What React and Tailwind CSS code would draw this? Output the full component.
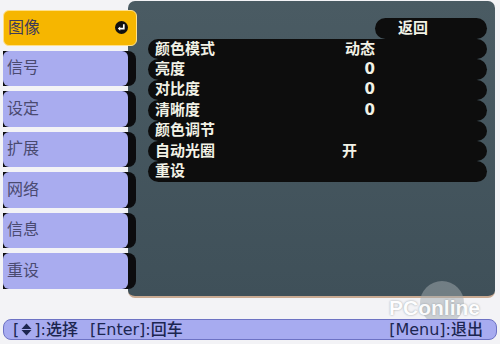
import React from 'react'

const tabs = ['图像', '信号', '设定', '扩展', '网络', '信息', '重设']

const rows = [
    { label: '颜色模式', value: '动态', align: 'text-right' },
    { label: '亮度', value: '0', align: 'text-right' },
    { label: '对比度', value: '0', align: 'text-right' },
    { label: '清晰度', value: '0', align: 'text-right' },
    { label: '颜色调节', value: '', align: 'text-right' },
    { label: '自动光圈', value: '开', align: 'text-left' },
    { label: '重设', value: '', align: 'text-right' },
]

const font = { fontFamily: '"DejaVu Sans", "Noto Sans CJK SC", sans-serif' }

const EnterIcon = () => (
    <svg width="13" height="13" viewBox="0 0 13 13">
        <circle cx="6.5" cy="6.5" r="6.5" fill="#111" />
        <path d="M8.8 3.2 V7.6 H4.6" stroke="#fff" strokeWidth="1.7" fill="none" />
        <path d="M2.8 7.6 L5.2 5.4 V9.8 Z" fill="#fff" />
    </svg>
)

const UpDownIcon = () => (
    <svg width="11" height="13" viewBox="0 0 11 13" className="inline-block">
        <path d="M5.5 0.5 L10.5 6 H0.5 Z" fill="#1c2650" />
        <path d="M5.5 12.5 L10.5 7 H0.5 Z" fill="#1c2650" />
    </svg>
)

export default function App() {
    return (
        <div className="relative w-[500px] h-[344px] bg-[#f3f3f6] overflow-hidden" style={font}>
            <div className="flex h-[300px]">
                {/* Tabs */}
                <div className="relative z-10 w-[128px] shrink-0 pl-[3px] pt-[10px] flex flex-col gap-[5px]">
                    {tabs.map((t, i) =>
                        i === 0 ? (
                            <div key={t} className="w-[134px] h-[35.5px] rounded-[6px] bg-[#f6b600] border border-[#ffe08a] flex items-center justify-between pl-[4px] pr-[8px]">
                                <span className="text-[16px] text-[#3d3a5a]">{t}</span>
                                <EnterIcon />
                            </div>
                        ) : (
                            <div key={t} className="w-[133px] h-[35.5px] rounded-r-[8px] bg-[#0c0c0e]">
                                <div className="w-[125px] h-full rounded-[6px] bg-[#a9acef] flex items-center pl-[4px]">
                                    <span className="text-[16px] text-[#4a4a70]">{t}</span>
                                </div>
                            </div>
                        )
                    )}
                </div>

                {/* Main panel */}
                <div className="flex-1 mr-[5px] mt-[1px] h-[297px] rounded-[7px] bg-gradient-to-b from-[#4a5b63] to-[#3f5059] border-b-2 border-[#c9aa92] pt-[17px] pr-[8px]">
                    <div className="flex justify-end">
                        <div className="w-[112px] h-[21px] rounded-full bg-[#0d0d0d] pl-[23px] flex items-center">
                            <span className="text-[15px] font-bold text-[#f2f2e6]">返回</span>
                        </div>
                    </div>
                    <div className="ml-[20px] flex flex-col">
                        {rows.map((r) => (
                            <div key={r.label} className="h-[20.4px] rounded-full bg-[#0d0d0d] flex items-center pl-[7px]">
                                <span className="w-[187px] text-[15px] font-bold leading-none text-[#f2f2e6]">{r.label}</span>
                                <span className={`w-[33px] text-[15px] font-bold leading-none text-[#f2f2e6] ${r.align}`}>{r.value}</span>
                            </div>
                        ))}
                    </div>
                </div>
            </div>

            {/* Watermark */}
            <div className="absolute left-[420px] top-[281px] w-[44px] h-[44px] rounded-full bg-[#a3abb0] opacity-50"></div>
            <div className="absolute left-[389px] top-[297px] text-[21px] font-bold leading-none text-white opacity-90 [text-shadow:0_0_2px_#8a9298]" style={{ fontFamily: '"Liberation Sans", sans-serif' }}>
                PConline
            </div>

            {/* Bottom help bar */}
            <div className="absolute left-[3px] right-[3px] top-[319px] h-[21px] rounded-[8px] bg-[#a7abf0] border border-[#6d72c4] flex items-center justify-between pl-[9px] pr-[13px] text-[16px] leading-none text-[#1c2650] font-medium">
                <span className="flex items-center gap-[12px]">
                    <span className="flex items-center gap-[2px]">
                        <span>[</span>
                        <UpDownIcon />
                        <span>]:选择</span>
                    </span>
                    <span>[Enter]:回车</span>
                </span>
                <span>[Menu]:退出</span>
            </div>
        </div>
    )
}
